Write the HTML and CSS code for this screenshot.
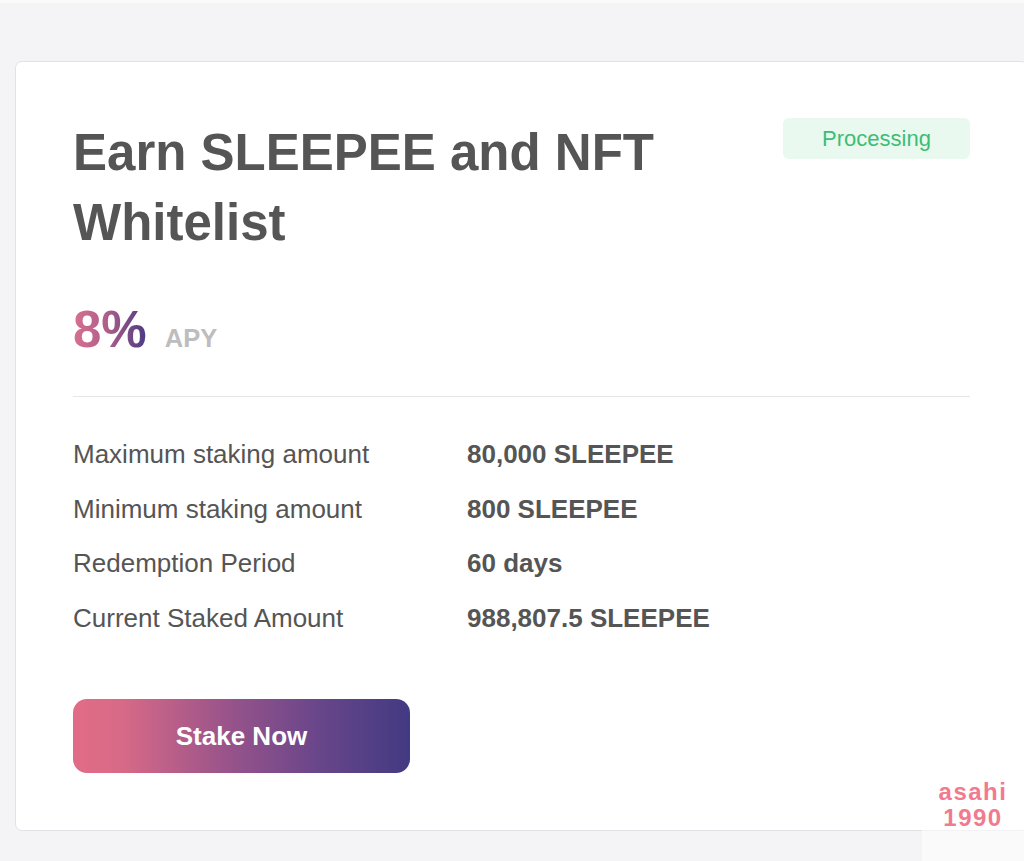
FILE: index.html
```html
<!DOCTYPE html>
<html lang="en">
<head>
<meta charset="utf-8">
<title>Earn SLEEPEE and NFT Whitelist</title>
<link rel="stylesheet" href="styles.css">
</head>
<body>
<div class="page">
  <div class="card">
    <div class="card-head">
      <h1 class="title">Earn SLEEPEE and NFT Whitelist</h1>
      <span class="badge">Processing</span>
    </div>
    <div class="apy-row">
      <span class="apy-value">8%</span>
      <span class="apy-label">APY</span>
    </div>
    <div class="divider"></div>
    <dl class="details">
      <dt>Maximum staking amount</dt><dd>80,000 SLEEPEE</dd>
      <dt>Minimum staking amount</dt><dd>800 SLEEPEE</dd>
      <dt>Redemption Period</dt><dd>60 days</dd>
      <dt>Current Staked Amount</dt><dd>988,807.5 SLEEPEE</dd>
    </dl>
    <button class="stake-btn">Stake Now</button>
  </div>
</div>
<div class="watermark"><span>asahi</span><span>1990</span></div>
</body>
</html>
```

FILE: styles.css
```css
html, body {
  margin: 0;
  padding: 0;
}
body {
  background: #f4f4f6;
  font-family: "Liberation Sans", Arial, sans-serif;
  overflow: hidden;
  height: 861px;
  border-top: 3px solid #fafafb;
  box-sizing: border-box;
}
.page {
  padding: 58px 0 0 15px;
}
.card {
  width: 1013px;
  box-sizing: border-box;
  background: #ffffff;
  border: 1px solid #e2e2e6;
  border-radius: 7px;
  padding: 56px 57px 57px 57px;
}
.card-head {
  display: flex;
  justify-content: space-between;
  align-items: flex-start;
}
.title {
  margin: 0;
  font-size: 51px;
  line-height: 70px;
  font-weight: 700;
  color: #555555;
}
.badge {
  flex: none;
  margin-top: 0;
  width: 187px;
  height: 41px;
  line-height: 41px;
  text-align: center;
  border-radius: 6px;
  background: #e9f9ef;
  color: #3dbd76;
  font-size: 22px;
}
.apy-row {
  margin-top: 42px;
  height: 60px;
  line-height: 60px;
  display: flex;
  align-items: baseline;
}
.apy-value {
  font-size: 51px;
  font-weight: 700;
  background: linear-gradient(90deg, #d8708f 0%, #b05e8b 45%, #4a3a84 100%);
  -webkit-background-clip: text;
  background-clip: text;
  color: transparent;
}
.apy-label {
  margin-left: 18px;
  font-size: 25.5px;
  font-weight: 700;
  color: #bdbdbd;
}
.divider {
  margin-top: 36px;
  height: 1px;
  background: #e6e6e8;
}
.details {
  margin: 30px 0 0 0;
  display: grid;
  grid-template-columns: 394px 1fr;
  font-size: 26px;
  line-height: 54.5px;
  color: #555555;
}
.details dt {
  margin: 0;
}
.details dd {
  margin: 0;
  font-weight: 700;
}
.stake-btn {
  display: block;
  margin-top: 54px;
  width: 337px;
  height: 74px;
  border: none;
  border-radius: 14px;
  background: linear-gradient(90deg, #e26c86 0%, #d86a87 14%, #9a548a 45%, #6a468a 72%, #423a82 100%);
  color: #ffffff;
  font-family: "Liberation Sans", Arial, sans-serif;
  font-size: 26px;
  font-weight: 700;
  padding: 0;
}
.watermark {
  position: absolute;
  right: 0;
  bottom: 0;
  width: 102px;
  height: 100px;
  background: rgba(255, 255, 255, 0.55);
  display: flex;
  flex-direction: column;
  align-items: center;
  justify-content: flex-start;
  padding-top: 18px;
  box-sizing: border-box;
  color: #f27a8f;
  font-weight: 700;
  font-size: 24px;
  line-height: 26px;
  letter-spacing: 1.5px;
}
```
